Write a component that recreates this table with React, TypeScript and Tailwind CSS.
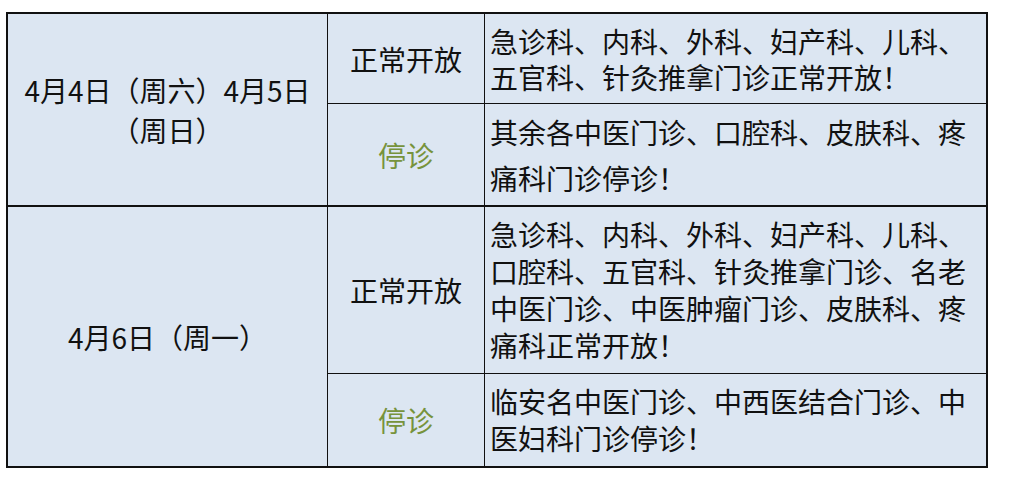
const FONT = { fontFamily: '"Noto Sans CJK SC", "Noto Sans", sans-serif' };

function Lines({ lines, leading }: { lines: string[]; leading: string }) {
    return (
        <div className={`${leading} whitespace-nowrap`}>
            {lines.map((l, i) => (
                <div key={i}>{l}</div>
            ))}
        </div>
    );
}

export default function App() {
    return (
        <div className="w-[1011px] h-[503px] bg-white pt-[12px] pl-[6px] text-[28px] text-[#111]" style={FONT}>
            <div className="w-[982px] border-2 border-[#111] bg-[#dce6f2] flex flex-col">
                {/* 4/4 - 4/5 */}
                <div className="flex h-[191px]">
                    <div className="w-[320px] border-r border-[#111] flex items-center justify-center text-center leading-[40px]">
                        <div>
                            <div>4月4日（周六）4月5日</div>
                            <div>（周日）</div>
                        </div>
                    </div>
                    <div className="flex-1 flex flex-col">
                        <div className="flex h-[90px] border-b border-[#111]">
                            <div className="w-[157px] border-r border-[#111] flex items-center justify-center">正常开放</div>
                            <div className="flex-1 flex items-center pl-[5px]">
                                <Lines leading="leading-[36px]" lines={['急诊科、内科、外科、妇产科、儿科、', '五官科、针灸推拿门诊正常开放！']} />
                            </div>
                        </div>
                        <div className="flex flex-1">
                            <div className="w-[157px] border-r border-[#111] flex items-center justify-center text-[#77933c]">停诊</div>
                            <div className="flex-1 flex items-center pl-[5px]">
                                <Lines leading="leading-[46px]" lines={['其余各中医门诊、口腔科、皮肤科、疼', '痛科门诊停诊！']} />
                            </div>
                        </div>
                    </div>
                </div>

                {/* 4/6 */}
                <div className="flex h-[261px] border-t-2 border-[#111]">
                    <div className="w-[320px] border-r border-[#111] flex items-center justify-center">4月6日（周一）</div>
                    <div className="flex-1 flex flex-col">
                        <div className="flex h-[167px] border-b border-[#111]">
                            <div className="w-[157px] border-r border-[#111] flex items-center justify-center">正常开放</div>
                            <div className="flex-1 flex items-center pl-[5px]">
                                <Lines
                                    leading="leading-[37px]"
                                    lines={['急诊科、内科、外科、妇产科、儿科、', '口腔科、五官科、针灸推拿门诊、名老', '中医门诊、中医肿瘤门诊、皮肤科、疼', '痛科正常开放！']}
                                />
                            </div>
                        </div>
                        <div className="flex flex-1">
                            <div className="w-[157px] border-r border-[#111] flex items-center justify-center text-[#77933c]">停诊</div>
                            <div className="flex-1 flex items-center pl-[5px]">
                                <Lines leading="leading-[37px]" lines={['临安名中医门诊、中西医结合门诊、中', '医妇科门诊停诊！']} />
                            </div>
                        </div>
                    </div>
                </div>
            </div>
        </div>
    );
}
